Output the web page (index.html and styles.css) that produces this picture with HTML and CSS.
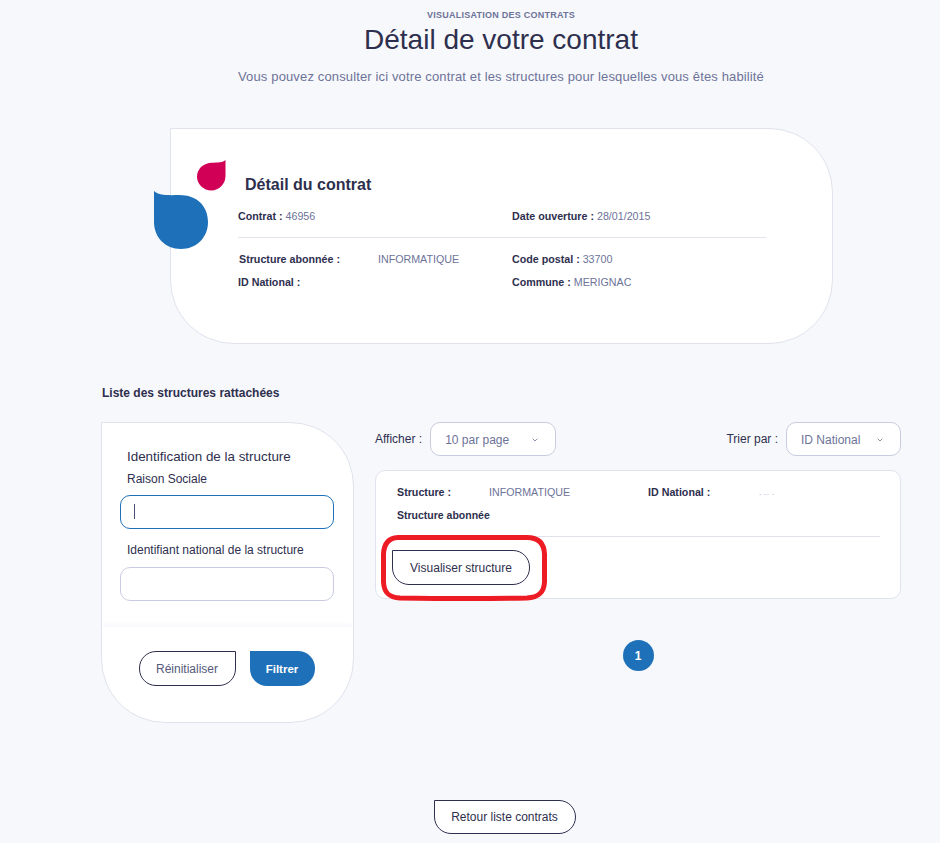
FILE: index.html
```html
<!DOCTYPE html>
<html lang="fr">
<head>
<meta charset="utf-8">
<title>Détail de votre contrat</title>
<link rel="stylesheet" href="styles.css">
</head>
<body>
<main class="page">
  <header class="head">
    <p class="eyebrow">VISUALISATION DES CONTRATS</p>
    <h1 class="title">Détail de votre contrat</h1>
    <p class="subtitle">Vous pouvez consulter ici votre contrat et les structures pour lesquelles vous êtes habilité</p>
  </header>

  <section class="contract">
    <svg class="drops" width="74" height="90" viewBox="0 0 74 90" aria-hidden="true">
      <path fill="#d10056" d="M71.500 0V16C71.500 24 65 30.500 57.500 30.500C49.500 30.500 43 24 43 17C43 9 49 3.500 57 2.800C64 2.500 69 2.500 71.500 0Z"/>
      <path fill="#1e71b8" d="M0 31C4 35 12 35.500 25 35C43 35 54 46 54 62C54 78 42 89 27 89C11 89 0 77 0 62Z"/>
    </svg>
    <h2 class="contract-title">Détail du contrat</h2>
    <div class="contract-row first">
      <p class="field"><b>Contrat :</b> 46956</p>
      <p class="field"><b>Date ouverture :</b> 28/01/2015</p>
    </div>
    <hr class="rule">
    <div class="contract-row second">
      <p class="field"><b class="fixed">Structure abonnée :</b> INFORMATIQUE</p>
      <p class="field"><b>Code postal :</b> 33700</p>
    </div>
    <div class="contract-row third">
      <p class="field"><b>ID National :</b></p>
      <p class="field"><b>Commune :</b> MERIGNAC</p>
    </div>
  </section>

  <h2 class="list-title">Liste des structures rattachées</h2>

  <div class="columns">
    <aside class="filter">
      <div class="filter-body">
        <h3 class="filter-title">Identification de la structure</h3>
        <label class="label first-label" for="raison">Raison Sociale</label>
        <div class="input focused" id="raison"><span class="caret"></span></div>
        <label class="label second-label" for="ident">Identifiant national de la structure</label>
        <div class="input" id="ident"></div>
      </div>
      <div class="filter-foot">
        <button class="btn reset" type="button">Réinitialiser</button>
        <button class="btn apply" type="button">Filtrer</button>
      </div>
    </aside>

    <div class="results">
      <div class="toolbar">
        <div class="control">
          <span class="control-label">Afficher :</span>
          <div class="select per-page"><span>10 par page</span>
            <svg class="chev" width="6" height="4" viewBox="0 0 6 4" aria-hidden="true"><path d="M.7.7L3 3 5.300.7" fill="none" stroke="#8b90ad" stroke-width="1"/></svg>
          </div>
        </div>
        <div class="control">
          <span class="control-label">Trier par :</span>
          <div class="select sort"><span>ID National</span>
            <svg class="chev" width="6" height="4" viewBox="0 0 6 4" aria-hidden="true"><path d="M.7.7L3 3 5.300.7" fill="none" stroke="#8b90ad" stroke-width="1"/></svg>
          </div>
        </div>
      </div>

      <article class="result-card">
        <div class="result-info">
          <p class="field"><b class="fixed-small">Structure :</b> INFORMATIQUE</p>
          <p class="field"><b class="fixed-id">ID National :</b> <span class="ghost">- -- -</span></p>
          <p class="field result-sub"><b>Structure abonnée</b></p>
        </div>
        <hr class="result-rule">
        <button class="btn view" type="button">Visualiser structure</button>
        <svg class="annotation" width="166" height="66" viewBox="0 0 166 66" aria-hidden="true">
          <path d="M17 2.500H146C157 2.500 163 8 163.500 19V47C163 58 157 62.500 146 63C105 63.800 60 63.800 19 63C8 62.500 3 58 2.500 47V19C3 8 8 3 17 2.500Z" fill="none" stroke="#ed1c24" stroke-width="5"/>
        </svg>
      </article>

      <nav class="pager"><span class="page-dot">1</span></nav>
    </div>
  </div>

  <div class="back"><button class="btn back-btn" type="button">Retour liste contrats</button></div>
</main>
</body>
</html>
```

FILE: styles.css
```css
* { box-sizing: border-box; }
html, body { margin: 0; padding: 0; }
body {
  background: #f7f8fb;
  color: #2e2f4e;
  font-family: "Liberation Sans", Arial, sans-serif;
  height: 843px;
  overflow: hidden;
}
p, h1, h2, h3 { margin: 0; }
.page { width: 800px; margin-left: 101px; }

.head { text-align: center; padding-top: 9px; }
.eyebrow { font-size: 9px; line-height: 12px; font-weight: 700; color: #6d7399; letter-spacing: .25px; }
.title { font-size: 28px; line-height: 34px; font-weight: 400; color: #2e2f4e; margin-top: 2px; }
.subtitle { font-size: 13px; line-height: 16px; font-weight: 400; color: #6d7399; margin-top: 12px; letter-spacing: .14px; }

.contract {
  position: relative;
  margin: 43px 0 0 69px;
  width: 663px;
  height: 216px;
  background: #fff;
  border: 1px solid #e0e2ee;
  border-radius: 0 64px 64px 64px;
  padding: 46px 66px 0 67px;
}
.drops { position: absolute; left: -17px; top: 31px; }
.contract-title { font-size: 16px; line-height: 19px; font-weight: 700; color: #2e2f4e; margin-left: 7px; }
.contract-row { display: grid; grid-template-columns: 274px 1fr; }
.first { margin-top: 15px; }
.second { margin-top: 14px; }
.third { margin-top: 9px; }
.field { font-size: 10.700px; line-height: 14px; color: #6d7399; white-space: nowrap; }
.field b { font-weight: 700; color: #2e2f4e; }
.second .field:first-child { padding-left: 1px; }
.rule { border: 0; border-top: 1px solid #e0e2ee; margin: 14px 0 0; }
.fixed { display: inline-block; width: 136px; }

.list-title { font-size: 12px; line-height: 16px; font-weight: 700; color: #2e2f4e; margin: 41px 0 0 1px; }

.columns { display: grid; grid-template-columns: 253px 526px; column-gap: 21px; margin-top: 21px; align-items: start; }

.filter {
  height: 301px;
  background: #fff;
  border: 1px solid #e0e2ee;
  border-radius: 0 64px 64px 64px;
  overflow: hidden;
}
.filter-body { height: 204px; padding: 26px 19px 0 18px; }
.filter-title { font-size: 13.400px; line-height: 15px; font-weight: 400; color: #2e2f4e; margin-left: 7px; }
.label { display: block; font-size: 12px; line-height: 14px; color: #2e2f4e; margin-left: 7px; }
.first-label { margin-top: 8px; }
.second-label { margin-top: 14px; }
.input { height: 34px; border: 1px solid #c9cbe0; border-radius: 10px; background: #fff; margin-top: 9px; padding: 8px 13px; }
.second-label + .input { margin-top: 10px; }
.focused { border-color: #1e71b8; }
.caret { display: block; width: 1px; height: 15px; background: #4a4e75; }
.filter-foot { display: flex; justify-content: center; gap: 14px; padding: 24px 2px 0 0; box-shadow: 0 -3px 5px rgba(235, 237, 245, .35); height: 100%; }

.btn { font-family: inherit; font-size: 12px; line-height: 16px; cursor: pointer; }
.reset {
  width: 97px; height: 35px; background: #fff; color: #55597b;
  border: 1px solid #2e2f4e; border-radius: 17px 0 17px 17px;
}
.apply {
  width: 65px; height: 35px; background: #1e71b8; color: #fff; border: 0;
  border-radius: 0 17px 17px 17px; font-size: 11.500px; font-weight: 700;
}

.toolbar { display: flex; justify-content: space-between; align-items: center; height: 34px; }
.control { display: flex; align-items: center; gap: 8px; }
.control-label { font-size: 12px; line-height: 16px; color: #2e2f4e; }
.select {
  height: 34px; display: flex; align-items: center; justify-content: space-between;
  background: #fff; border: 1px solid #c9cbe0; border-radius: 10px;
  font-size: 12px; color: #6d7399;
}
.per-page { width: 126px; padding: 1px 17px 0 14px; }
.sort { width: 115px; padding: 1px 17px 0 14px; }
.chev { flex: none; }

.result-card {
  position: relative;
  margin-top: 14px;
  height: 129px;
  background: #fff;
  border: 1px solid #e0e2ee;
  border-radius: 10px;
  padding: 14px 20px 0 21px;
}
.result-info { display: grid; grid-template-columns: 251px 1fr; grid-auto-rows: 14px; row-gap: 9px; height: 51px; }
.result-sub { grid-column: 1 / -1; }
.result-card .result-sub { font-size: 10.500px; }
.fixed-small { display: inline-block; width: 89px; }
.fixed-id { display: inline-block; width: 108px; }
.ghost { font-size: 8px; color: #c3c7d6; }
.result-rule { border: 0; border-top: 1px solid #e0e2ee; margin: 0; }
.view {
  display: block; width: 138px; height: 35px; margin: 13px 0 0 -5px;
  background: #fff; color: #2e2f4e; border: 1px solid #2e2f4e; border-radius: 0 17px 17px 17px;
}
.annotation { position: absolute; left: 5px; top: 64px; }

.pager { display: flex; justify-content: center; margin-top: 41px; }
.page-dot {
  width: 31px; height: 31px; border-radius: 50%; background: #1e71b8; color: #fff;
  font-size: 12px; font-weight: 700; display: flex; align-items: center; justify-content: center;
}

.back { display: flex; justify-content: center; margin-top: 77px; padding-left: 7px; }
.back-btn {
  width: 142px; height: 34px; background: #fff; color: #2e2f4e;
  border: 1px solid #2e2f4e; border-radius: 0 17px 17px 17px;
}
```
